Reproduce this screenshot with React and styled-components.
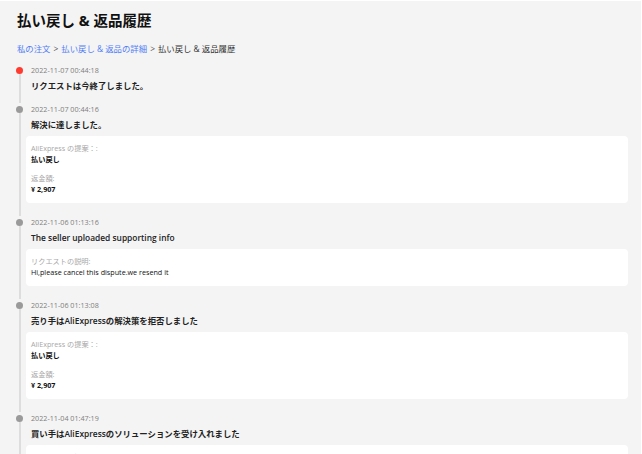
import React from 'react';
import styled, { createGlobalStyle } from 'styled-components';

const GlobalStyle = createGlobalStyle`
  html, body {
    margin: 0;
    padding: 0;
    background: #ffffff;
  }
  body {
    font-family: "Open Sans", "Noto Sans CJK JP", sans-serif;
    color: #222222;
  }
`;

const events = [
  { time: '2022-11-07 00:44:18', title: 'リクエストは今終了しました。', active: true },
  {
    time: '2022-11-07 00:44:16',
    title: '解決に達しました。',
    fields: [
      { label: 'AliExpress の提案：:', value: '払い戻し', strong: true },
      { label: '返金額:', value: '¥ 2,907', strong: true },
    ],
  },
  {
    time: '2022-11-06 01:13:16',
    title: 'The seller uploaded supporting info',
    fields: [{ label: 'リクエストの説明:', value: 'Hi,please cancel this dispute.we resend it' }],
  },
  {
    time: '2022-11-06 01:13:08',
    title: '売り手はAliExpressの解決策を拒否しました',
    fields: [
      { label: 'AliExpress の提案：:', value: '払い戻し', strong: true },
      { label: '返金額:', value: '¥ 2,907', strong: true },
    ],
  },
  {
    time: '2022-11-04 01:47:19',
    title: '買い手はAliExpressのソリューションを受け入れました',
    fields: [
      { label: 'AliExpress の提案：:', value: '払い戻し', strong: true },
      { label: '返金額:', value: '¥ 2,907', strong: true },
    ],
  },
];

const App = () => {
  return (
    <>
      <GlobalStyle />
      <Page>
        <Heading>払い戻し &amp; 返品履歴</Heading>
        <Breadcrumb>
          <Crumb href="#">私の注文</Crumb>
          <Sep>&gt;</Sep>
          <Crumb href="#">払い戻し &amp; 返品の詳細</Crumb>
          <Sep>&gt;</Sep>
          <Current>払い戻し &amp; 返品履歴</Current>
        </Breadcrumb>

        <Timeline>
          {events.map((ev, i) => (
            <Item key={i}>
              <Rail>
                <Dot $active={ev.active} />
                <Line />
              </Rail>
              <Body $hasCard={!!ev.fields}>
                <Time>{ev.time}</Time>
                <Title>{ev.title}</Title>
                {ev.fields && (
                  <Card>
                    {ev.fields.map((f, j) => (
                      <Field key={j}>
                        <Label>{f.label}</Label>
                        <Value $strong={f.strong}>{f.value}</Value>
                      </Field>
                    ))}
                  </Card>
                )}
              </Body>
            </Item>
          ))}
        </Timeline>
      </Page>
    </>
  );
};

const Page = styled.div`
  background: #f4f4f4;
  margin: 1px 1px 0 0;
  height: 453px;
  overflow: hidden;
  padding: 10px 13px 0 16px;
  box-sizing: border-box;
`;

const Heading = styled.h1`
  margin: 0 0 0 1px;
  font-size: 14.5px;
  line-height: 20px;
  font-weight: 700;
  color: #111111;
`;

const Breadcrumb = styled.div`
  display: flex;
  align-items: center;
  gap: 3px;
  margin: 12px 0 9px 1px;
  font-size: 8.4px;
  line-height: 12px;
`;

const Crumb = styled.a`
  color: #4f7df6;
  text-decoration: none;
`;

const Sep = styled.span`
  color: #555555;
`;

const Current = styled.span`
  color: #333333;
`;

const Timeline = styled.div`
  display: flex;
  flex-direction: column;
`;

const Item = styled.div`
  display: grid;
  grid-template-columns: 7px 1fr;
  column-gap: 3px;
`;

const Rail = styled.div`
  display: flex;
  flex-direction: column;
  align-items: center;
`;

const Dot = styled.span`
  width: 7px;
  height: 7px;
  border-radius: 50%;
  margin-top: 3px;
  flex: none;
  background: ${(p) => (p.$active ? '#ff3b2f' : '#9a9a9a')};
`;

const Line = styled.span`
  flex: 1;
  width: 2px;
  background: #dddddd;
`;

const Body = styled.div`
  padding-bottom: ${(p) => (p.$hasCard ? '13px' : '10px')};
`;

const Time = styled.div`
  padding-left: 5px;
  font-size: 7.2px;
  line-height: 12px;
  color: #7e7e7e;
`;

const Title = styled.div`
  padding-left: 5px;
  margin-top: 3px;
  font-size: 8.4px;
  line-height: 14px;
  font-weight: 600;
  color: #222222;
`;

const Card = styled.div`
  margin-top: 4px;
  background: #ffffff;
  border-radius: 4px;
  padding: 7px 5px 8px;
  display: flex;
  flex-direction: column;
  gap: 8px;
`;

const Field = styled.div`
  display: flex;
  flex-direction: column;
`;

const Label = styled.div`
  font-size: 7.2px;
  line-height: 11px;
  color: #a8a8a8;
`;

const Value = styled.div`
  font-size: 7.2px;
  line-height: 11px;
  color: #111111;
  font-weight: ${(p) => (p.$strong ? 700 : 400)};
`;

export default App;
